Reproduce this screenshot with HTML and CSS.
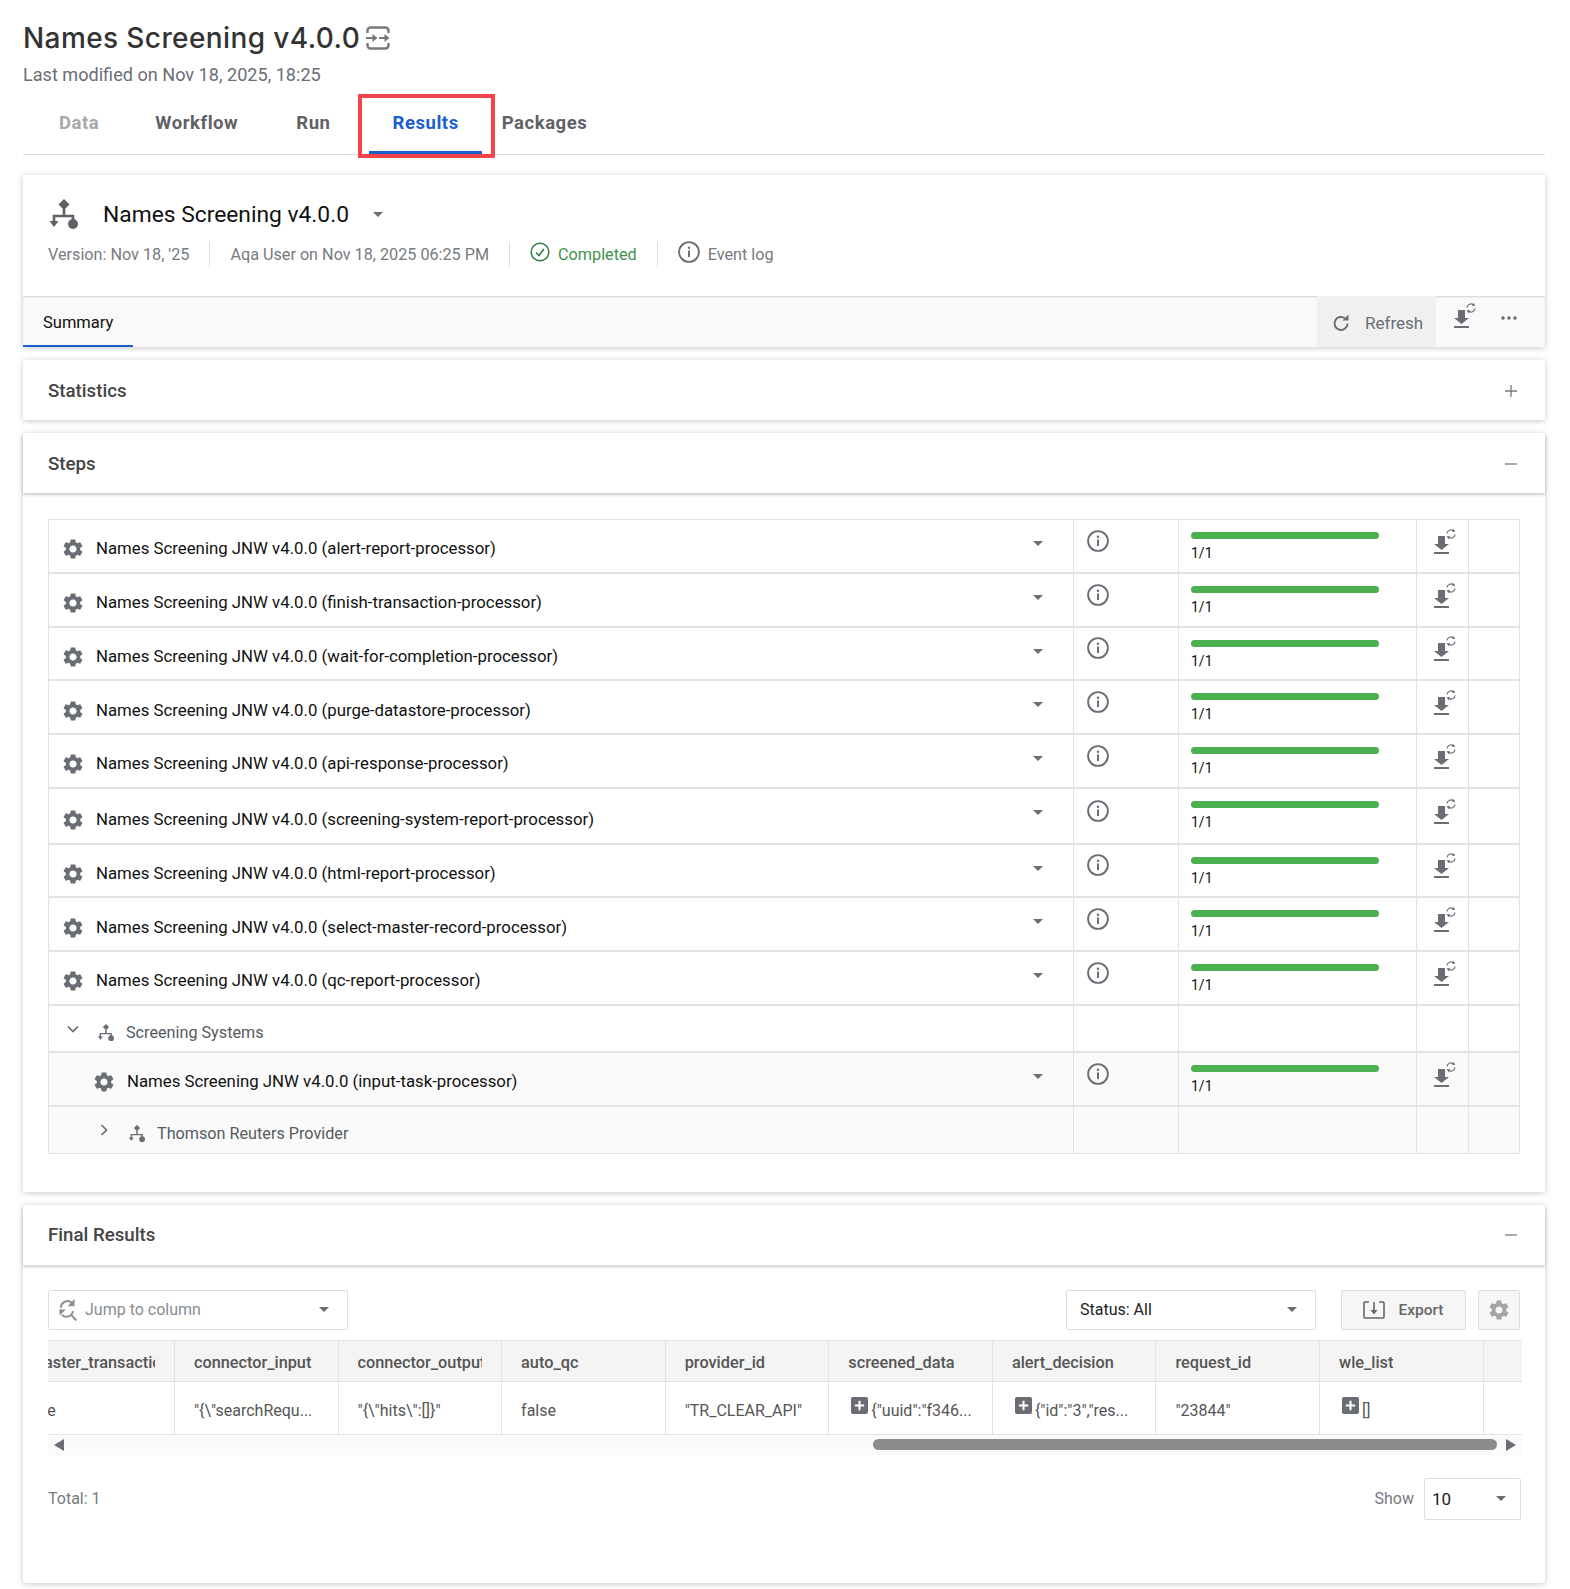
FILE: index.html
```html
<!DOCTYPE html>
<html lang="en">
<head>
  <meta charset="UTF-8" />
  <meta name="viewport" content="width=device-width, initial-scale=1.0"/>
  <title>Names Screening v4.0.0</title>
  <link rel="stylesheet" href="styles.css">
</head>
<body>

  <!-- ======= ICONS ======= -->
  <svg class="sprite" width="0" height="0">
    <symbol id="i-gear" viewBox="0 0 24 24">
      <path fill="currentColor" fill-rule="evenodd" d="M19.14 12.94c.04-.3.06-.61.06-.94 0-.32-.02-.64-.07-.94l2.03-1.58c.18-.14.23-.41.12-.61l-1.92-3.32c-.12-.22-.37-.29-.59-.22l-2.39.96c-.5-.38-1.03-.7-1.62-.94l-.36-2.54c-.04-.24-.24-.41-.48-.41h-3.84c-.24 0-.43.17-.47.41l-.36 2.54c-.59.24-1.13.57-1.62.94l-2.39-.96c-.22-.08-.47 0-.59.22L2.74 8.87c-.12.21-.08.47.12.61l2.03 1.58c-.05.3-.09.63-.09.94s.02.64.07.94l-2.03 1.58c-.18.14-.23.41-.12.61l1.92 3.32c.12.22.37.29.59.22l2.39-.96c.5.38 1.03.7 1.62.94l.36 2.54c.05.24.24.41.48.41h3.84c.24 0 .44-.17.47-.41l.36-2.54c.59-.24 1.13-.56 1.62-.94l2.39.96c.22.08.47 0 .59-.22l1.92-3.32c.12-.22.07-.47-.12-.61l-2.01-1.58zM12 15.6c-1.98 0-3.6-1.62-3.6-3.6s1.62-3.6 3.6-3.6 3.6 1.62 3.6 3.6-1.62 3.6-3.6 3.6z"/>
    </symbol>
    <symbol id="i-info" viewBox="0 0 20 20">
      <circle cx="10" cy="10" r="9" fill="none" stroke="currentColor" stroke-width="1.7"/>
      <rect x="9.1" y="8.6" width="1.8" height="6" fill="currentColor"/>
      <circle cx="10" cy="6.2" r="1.1" fill="currentColor"/>
    </symbol>
    <symbol id="i-flow" viewBox="0 0 28 30">
      <path d="M14 0l5.500 5.500-5.500 5.500-5.500-5.500z" fill="currentColor"/>
      <path d="M14 10v7M4 24v-7h19v6" fill="none" stroke="currentColor" stroke-width="2.600"/>
      <path d="M-.5 22h9l-4.500 6z" fill="currentColor"/>
      <circle cx="23" cy="25" r="5" fill="currentColor"/>
    </symbol>
    <symbol id="i-dl" viewBox="0 0 22 26">
      <path d="M4 7h7v8h4l-7.500 6-7.500-6h4z" fill="currentColor"/>
      <rect x="0" y="23" width="15" height="2" fill="currentColor"/>
      <path d="M13 4.500a4 4 0 0 1 6.500-2.700M21 5.500a4 4 0 0 1-6.500 2.700" fill="none" stroke="currentColor" stroke-width="1.200"/>
      <path d="M19.500 0l1.800 2.700-3.200.2zM14.500 10.300l-1.800-3 3.200-.2z" fill="currentColor"/>
    </symbol>
    <symbol id="i-plus" viewBox="0 0 18 18">
      <rect width="18" height="18" rx="2" fill="currentColor"/>
      <path d="M9 4v10M4 9h10" stroke="#fff" stroke-width="2.200"/>
    </symbol>
  </svg>

  <!-- ======= HEADER ======= -->
  <header class="page-head">
    <h1 class="page-title">
      <span>Names Screening v4.0.0</span>
      <svg class="title-icon" viewBox="0 0 24 24" width="24" height="24">
        <path d="M1.500 7V4.500a3 3 0 0 1 3-3h15a3 3 0 0 1 3 3V7M1.500 17v2.500a3 3 0 0 0 3 3h15a3 3 0 0 0 3-3V17" fill="none" stroke="currentColor" stroke-width="2.400"/>
        <path d="M0 12h7M13 12h7" fill="none" stroke="currentColor" stroke-width="2"/>
        <path d="M6.500 8l5 4-5 4zM18.500 8l5 4-5 4z" fill="currentColor"/>
      </svg>
    </h1>
    <p class="modified">Last modified on Nov 18, 2025, 18:25</p>
    <nav class="tabs">
      <div class="tab disabled">Data</div>
      <div class="tab">Workflow</div>
      <div class="tab">Run</div>
      <div class="tab active">Results</div>
      <div class="tab">Packages</div>
    </nav>
  </header>

  <main>
    <!-- ======= RUN SUMMARY ======= -->
    <section class="card run-card">
      <div class="run-top">
        <svg class="run-icon"><use href="#i-flow"/></svg>
        <span class="run-name">Names Screening v4.0.0</span>
        <span class="caret run-caret"></span>
      </div>
      <div class="run-meta">
        <span class="meta-item">Version: Nov 18, '25</span>
        <span class="meta-item">Aqa User on Nov 18, 2025 06:25 PM</span>
        <span class="meta-item done">
          <svg viewBox="0 0 20 20" width="20" height="20"><circle cx="10" cy="10" r="8.800" fill="none" stroke="currentColor" stroke-width="1.500"/><path d="M6 10.500l3 3 5-6.500" fill="none" stroke="currentColor" stroke-width="1.600"/></svg>
          Completed
        </span>
        <span class="meta-item log"><svg class="info"><use href="#i-info"/></svg>Event log</span>
      </div>
      <div class="run-bar">
        <div class="sub-tab">Summary</div>
        <div class="bar-actions">
          <button class="refresh">
            <svg viewBox="0 0 18 18" width="18" height="18"><path d="M15.500 9.500A6.500 6.500 0 1 1 13 4.300" fill="none" stroke="currentColor" stroke-width="2"/><path d="M10.500 6.500h6v-6z" fill="currentColor"/></svg>
            Refresh
          </button>
          <svg class="dl bar-dl"><use href="#i-dl"/></svg>
          <svg class="dots" viewBox="0 0 16 4" width="16" height="4"><circle cx="2" cy="2" r="1.700" fill="currentColor"/><circle cx="8" cy="2" r="1.700" fill="currentColor"/><circle cx="14" cy="2" r="1.700" fill="currentColor"/></svg>
        </div>
      </div>
    </section>

    <section class="card">
      <div class="card-head flat">
        <h2>Statistics</h2>
        <svg class="toggle" viewBox="0 0 12 12" width="12" height="12"><path d="M0 6h12M6 0v12" stroke="currentColor" stroke-width="1.300"/></svg>
      </div>
    </section>

    <!-- ======= STEPS ======= -->
    <section class="card">
      <div class="card-head">
        <h2>Steps</h2>
        <svg class="toggle" viewBox="0 0 12 12" width="12" height="12"><path d="M0 6h12" stroke="currentColor" stroke-width="1.300"/></svg>
      </div>
      <div class="steps-body">
        <div class="steps">
          <div class="step">
            <div class="cell name"><svg class="gear"><use href="#i-gear"/></svg>Names Screening JNW v4.0.0 (alert-report-processor)<span class="caret"></span></div>
            <div class="cell"><svg class="info"><use href="#i-info"/></svg></div>
            <div class="cell prog"><div class="bar"></div><span>1/1</span></div>
            <div class="cell"><svg class="dl"><use href="#i-dl"/></svg></div>
            <div class="cell"></div>
          </div>
          <div class="step">
            <div class="cell name"><svg class="gear"><use href="#i-gear"/></svg>Names Screening JNW v4.0.0 (finish-transaction-processor)<span class="caret"></span></div>
            <div class="cell"><svg class="info"><use href="#i-info"/></svg></div>
            <div class="cell prog"><div class="bar"></div><span>1/1</span></div>
            <div class="cell"><svg class="dl"><use href="#i-dl"/></svg></div>
            <div class="cell"></div>
          </div>
          <div class="step">
            <div class="cell name"><svg class="gear"><use href="#i-gear"/></svg>Names Screening JNW v4.0.0 (wait-for-completion-processor)<span class="caret"></span></div>
            <div class="cell"><svg class="info"><use href="#i-info"/></svg></div>
            <div class="cell prog"><div class="bar"></div><span>1/1</span></div>
            <div class="cell"><svg class="dl"><use href="#i-dl"/></svg></div>
            <div class="cell"></div>
          </div>
          <div class="step">
            <div class="cell name"><svg class="gear"><use href="#i-gear"/></svg>Names Screening JNW v4.0.0 (purge-datastore-processor)<span class="caret"></span></div>
            <div class="cell"><svg class="info"><use href="#i-info"/></svg></div>
            <div class="cell prog"><div class="bar"></div><span>1/1</span></div>
            <div class="cell"><svg class="dl"><use href="#i-dl"/></svg></div>
            <div class="cell"></div>
          </div>
          <div class="step">
            <div class="cell name"><svg class="gear"><use href="#i-gear"/></svg>Names Screening JNW v4.0.0 (api-response-processor)<span class="caret"></span></div>
            <div class="cell"><svg class="info"><use href="#i-info"/></svg></div>
            <div class="cell prog"><div class="bar"></div><span>1/1</span></div>
            <div class="cell"><svg class="dl"><use href="#i-dl"/></svg></div>
            <div class="cell"></div>
          </div>
          <div class="step tall">
            <div class="cell name"><svg class="gear"><use href="#i-gear"/></svg>Names Screening JNW v4.0.0 (screening-system-report-processor)<span class="caret"></span></div>
            <div class="cell"><svg class="info"><use href="#i-info"/></svg></div>
            <div class="cell prog"><div class="bar"></div><span>1/1</span></div>
            <div class="cell"><svg class="dl"><use href="#i-dl"/></svg></div>
            <div class="cell"></div>
          </div>
          <div class="step">
            <div class="cell name"><svg class="gear"><use href="#i-gear"/></svg>Names Screening JNW v4.0.0 (html-report-processor)<span class="caret"></span></div>
            <div class="cell"><svg class="info"><use href="#i-info"/></svg></div>
            <div class="cell prog"><div class="bar"></div><span>1/1</span></div>
            <div class="cell"><svg class="dl"><use href="#i-dl"/></svg></div>
            <div class="cell"></div>
          </div>
          <div class="step">
            <div class="cell name"><svg class="gear"><use href="#i-gear"/></svg>Names Screening JNW v4.0.0 (select-master-record-processor)<span class="caret"></span></div>
            <div class="cell"><svg class="info"><use href="#i-info"/></svg></div>
            <div class="cell prog"><div class="bar"></div><span>1/1</span></div>
            <div class="cell"><svg class="dl"><use href="#i-dl"/></svg></div>
            <div class="cell"></div>
          </div>
          <div class="step">
            <div class="cell name"><svg class="gear"><use href="#i-gear"/></svg>Names Screening JNW v4.0.0 (qc-report-processor)<span class="caret"></span></div>
            <div class="cell"><svg class="info"><use href="#i-info"/></svg></div>
            <div class="cell prog"><div class="bar"></div><span>1/1</span></div>
            <div class="cell"><svg class="dl"><use href="#i-dl"/></svg></div>
            <div class="cell"></div>
          </div>
          <div class="step group">
            <div class="cell name">
              <svg class="chev" viewBox="0 0 12 12"><path d="M1 3.500l5 5 5-5" fill="none" stroke="currentColor" stroke-width="1.700"/></svg>
              <svg class="flow"><use href="#i-flow"/></svg>Screening Systems
            </div>
            <div class="cell"></div><div class="cell"></div><div class="cell"></div><div class="cell"></div>
          </div>
          <div class="step nested">
            <div class="cell name"><svg class="gear"><use href="#i-gear"/></svg>Names Screening JNW v4.0.0 (input-task-processor)<span class="caret"></span></div>
            <div class="cell"><svg class="info"><use href="#i-info"/></svg></div>
            <div class="cell prog"><div class="bar"></div><span>1/1</span></div>
            <div class="cell"><svg class="dl"><use href="#i-dl"/></svg></div>
            <div class="cell"></div>
          </div>
          <div class="step group nested last">
            <div class="cell name">
              <svg class="chev" viewBox="0 0 12 12"><path d="M3.500 1l5 5-5 5" fill="none" stroke="currentColor" stroke-width="1.700"/></svg>
              <svg class="flow"><use href="#i-flow"/></svg>Thomson Reuters Provider
            </div>
            <div class="cell"></div><div class="cell"></div><div class="cell"></div><div class="cell"></div>
          </div>
        </div>
      </div>
    </section>

    <!-- ======= FINAL RESULTS ======= -->
    <section class="card">
      <div class="card-head results-head">
        <h2>Final Results</h2>
        <svg class="toggle" viewBox="0 0 12 12" width="12" height="12"><path d="M0 6h12" stroke="currentColor" stroke-width="1.300"/></svg>
      </div>
      <div class="results-body">
        <div class="toolbar">
          <div class="select jump">
            <svg viewBox="0 0 18 20" width="20" height="22"><path d="M2.500 8a6 6 0 0 1 10-4.500M13.500 11a6 6 0 0 1-10 3.500M11.500 14l5 5.500" fill="none" stroke="currentColor" stroke-width="1.800"/><path d="M15 0v6.500H8.500zM1 9.500h6L1.500 15z" fill="currentColor"/></svg>
            <span>Jump to column</span>
            <span class="caret"></span>
          </div>
          <div class="select status"><span>Status: All</span><span class="caret"></span></div>
          <button class="btn export">
            <svg viewBox="0 0 22 20" width="22" height="20"><path d="M6 2H2a1 1 0 0 0-1 1v14a1 1 0 0 0 1 1h18a1 1 0 0 0 1-1V3a1 1 0 0 0-1-1h-4" fill="none" stroke="currentColor" stroke-width="1.600"/><path d="M11 2v9" stroke="currentColor" stroke-width="1.600"/><path d="M7.500 10h7L11 14.500z" fill="currentColor"/></svg>
            Export
          </button>
          <button class="btn cog"><svg class="gear"><use href="#i-gear"/></svg></button>
        </div>

        <div class="grid-wrap">
          <table class="grid">
            <thead>
              <tr>
                <th><div>master_transaction</div></th>
                <th><div>connector_input</div></th>
                <th><div>connector_output</div></th>
                <th><div>auto_qc</div></th>
                <th><div>provider_id</div></th>
                <th><div>screened_data</div></th>
                <th><div>alert_decision</div></th>
                <th><div>request_id</div></th>
                <th><div>wle_list</div></th>
                <th class="tail"></th>
              </tr>
            </thead>
            <tbody>
              <tr>
                <td><div>true</div></td>
                <td><div>"{\"searchRequ...</div></td>
                <td><div>"{\"hits\":[]}"</div></td>
                <td><div>false</div></td>
                <td><div>"TR_CLEAR_API"</div></td>
                <td><div class="exp"><svg class="plus"><use href="#i-plus"/></svg>{"uuid":"f346...</div></td>
                <td><div class="exp"><svg class="plus"><use href="#i-plus"/></svg>{"id":"3","res...</div></td>
                <td><div>"23844"</div></td>
                <td><div class="exp"><svg class="plus"><use href="#i-plus"/></svg>[]</div></td>
                <td class="tail"></td>
              </tr>
            </tbody>
          </table>
          <div class="scroll">
            <span class="arrow left"></span>
            <span class="thumb"></span>
            <span class="arrow right"></span>
          </div>
        </div>

        <div class="pager">
          <span>Total: 1</span>
          <div class="show">
            <span>Show</span>
            <div class="select size"><span>10</span><span class="caret"></span></div>
          </div>
        </div>
      </div>
    </section>
  </main>
</body>
</html>
```

FILE: styles.css
```css
body {
  font-family: Roboto, 'Liberation Sans', sans-serif;
  margin: 0;
  padding: 0 25px 6px 23px;
  background: #fff;
  color: #111;
}

.sprite {
  position: absolute;
}

/* ===== HEADER ===== */
.page-head {
  padding-top: 19px;
}

.page-title {
  display: flex;
  align-items: center;
  gap: 6px;
  margin: 0;
  height: 38px;
  font-family: Inter, sans-serif;
  font-size: 28px;
  font-weight: 500;
  letter-spacing: 0.4px;
  color: #333;
}

.title-icon {
  color: #77797e;
}

.modified {
  margin: 6px 0 7px;
  height: 24px;
  line-height: 24px;
  font-size: 18.100px;
  color: #6a6e75;
}

.tabs {
  display: flex;
  gap: 12px;
  height: 60px;
  padding-left: 13px;
  border-bottom: 1px solid #ddd;
}

.tab {
  position: relative;
  padding: 0 23px;
  line-height: 58px;
  font-size: 18.500px;
  font-weight: 700;
  letter-spacing: 0.55px;
  color: #5f6166;
}

.tab.disabled {
  margin-right: -2px;
  color: #a8a8a8;
}

.tab.active {
  margin: 0 -15px 0 4px;
  color: #1a5fd0;
  border-bottom: 3px solid #1a5fd0;
}

/* annotation box around the current tab */
.tab.active::after {
  content: "";
  position: absolute;
  top: 0;
  left: -11px;
  right: -13px;
  bottom: -7px;
  border: 4px solid #f4444a;
}

/* ===== CARDS ===== */
.card {
  margin-top: 13px;
  background: #fff;
  border-radius: 2px;
  box-shadow: 0 1px 6px rgba(0, 0, 0, 0.22);
}

.run-card {
  margin-top: 20px;
}

.card-head {
  display: flex;
  justify-content: space-between;
  align-items: center;
  box-sizing: border-box;
  height: 60px;
  padding: 2px 25px 0 25px;
  box-shadow: 0 2px 3px rgba(0, 0, 0, 0.2);
}

.card-head.flat {
  box-shadow: none;
}

.card-head.results-head {
  padding-top: 0;
}

.card-head h2 {
  margin: 0;
  font-size: 18.700px;
  font-weight: 500;
  color: #444;
}

.toggle {
  margin-right: 3px;
  color: #77797e;
}

/* ===== RUN SUMMARY ===== */
.run-top {
  display: flex;
  align-items: center;
  height: 50px;
  padding: 14px 0 0 27px;
}

.run-icon {
  width: 28px;
  height: 30px;
  color: #5f6166;
}

.run-name {
  margin-left: 25px;
  font-size: 22.800px;
  color: #111;
}

.run-caret {
  margin-left: 24px;
}

.run-meta {
  display: flex;
  align-items: center;
  height: 25px;
  margin-top: 3px;
  padding: 0 0 29px 25px;
  font-size: 16.200px;
  color: #777a80;
}

.meta-item {
  display: flex;
  align-items: center;
  height: 25px;
  padding-right: 20px;
  margin-right: 20px;
  border-right: 1px solid #ddd;
}

.meta-item svg {
  margin-right: 8px;
  margin-top: -6px;
}

.meta-item:last-child {
  border-right: 0;
}

.meta-item.done {
  color: #3f8f4f;
}

.meta-item.done svg {
  color: #2e7d42;
}

.run-bar {
  display: flex;
  justify-content: space-between;
  height: 51px;
  background: #f9f9f9;
  box-shadow: inset 0 2px 2px -1px rgba(0, 0, 0, 0.15);
}

.sub-tab {
  padding: 0 20px;
  line-height: 53px;
  height: 49px;
  font-size: 16.500px;
  color: #111;
  border-bottom: 2px solid #1a5fc8;
}

.bar-actions {
  display: flex;
  align-items: center;
}

.refresh {
  display: flex;
  align-items: center;
  gap: 15px;
  height: 100%;
  width: 119px;
  padding: 2px 0 0 15px;
  border: 0;
  background: #f0f0f0;
  font: 17px Roboto, sans-serif;
  color: #6a6e75;
}

.dots {
  margin: -8px 28px 0 25px;
  color: #666;
}

/* ===== STEPS ===== */
.steps-body {
  padding: 26px 25px 38px 25px;
}

.steps {
  border: 1px solid #e2e2e2;
  border-bottom: 0;
}

.step {
  display: grid;
  grid-template-columns: 1025px 105px 238px 52px 49px;
  height: 53.750px;
  box-sizing: border-box;
  border-bottom: 2px solid #e3e3e3;
  font-size: 16.800px;
}

.step.tall {
  height: 55.750px;
}

.step.group {
  height: 47px;
  font-size: 16.200px;
  color: #555a61;
}

.step.nested {
  background: #fafafa;
}

.step.last {
  border-bottom: 1px solid #e2e2e2;
}

.cell {
  position: relative;
  display: flex;
  align-items: center;
  padding-left: 13px;
  border-right: 1px solid #e2e2e2;
}

.cell:last-child {
  border-right: 0;
}

.cell.name {
  padding: 5px 0 0 15px;
}

.step.tall .cell.name {
  padding-top: 7px;
}

.step.group .cell.name {
  padding-top: 8px;
}

.step.nested .cell.name {
  padding-left: 46px;
}

.gear {
  width: 24px;
  height: 24px;
  margin: 2px 11px 0 -3px;
  flex: none;
  color: #6a6d73;
}

.cell.name .caret {
  position: absolute;
  right: 30px;
  top: 21px;
}

.info {
  width: 22px;
  height: 22px;
  margin-top: -10px;
  color: #6a6d73;
}

.prog {
  display: block;
  padding: 12px 12px 0 12px;
  font-size: 14px;
}

.bar {
  width: 188px;
  height: 7px;
  margin-bottom: 6px;
  border-radius: 4px;
  background: #4caf50;
}

.dl {
  width: 22px;
  height: 26px;
  margin: -8px 0 0 4px;
  flex: none;
  color: #6a6d73;
}

.dl.bar-dl {
  margin: -11px 0 0 18px;
}

.chev {
  width: 12px;
  height: 12px;
  margin: -7px 19px 0 3px;
  flex: none;
  color: #6a6d73;
}

.flow {
  width: 16px;
  height: 17px;
  margin-right: 12px;
  flex: none;
  color: #6a6d73;
}

.caret {
  display: inline-block;
  width: 0;
  height: 0;
  border-left: 5px solid transparent;
  border-right: 5px solid transparent;
  border-top: 5px solid #6a6d73;
}

/* ===== FINAL RESULTS ===== */
.results-body {
  padding: 25px 25px 63px 25px;
}

.toolbar {
  display: flex;
  align-items: stretch;
  height: 40px;
  margin-bottom: 10px;
}

.select {
  display: flex;
  align-items: center;
  justify-content: space-between;
  box-sizing: border-box;
  background: #fff;
  border: 1px solid #ddd;
  border-radius: 2px;
  padding: 0 18px 0 13px;
  font-size: 16px;
  color: #222;
}

.jump {
  width: 300px;
  gap: 7px;
  padding-left: 9px;
  color: #8a8d92;
}

.jump svg {
  flex: none;
  color: #8f8f8f;
}

.jump span:nth-child(2) {
  flex: 1;
}

.status {
  width: 250px;
  margin-left: auto;
}

.btn {
  display: flex;
  align-items: center;
  justify-content: center;
  box-sizing: border-box;
  background: #f6f6f6;
  border: 1px solid #ddd;
  border-radius: 2px;
  font: 500 15.500px Roboto, sans-serif;
  color: #666;
}

.export {
  width: 125px;
  gap: 13px;
  margin-left: 25px;
}

.cog {
  width: 42px;
  margin-left: 12px;
  padding: 0;
}

.cog .gear {
  margin: 0;
  color: #a2a4a8;
}

.grid-wrap {
  position: relative;
  width: 1474px;
  overflow: hidden;
}

.grid {
  border-collapse: collapse;
  table-layout: fixed;
  margin-left: -37.200px;
  width: 1511.200px;
  font-size: 16px;
}

.grid th,
.grid td {
  width: 163.600px;
  padding: 0 19px;
  border: 1px solid #e2e2e2;
  border-left: 0;
  box-sizing: border-box;
  text-align: left;
  overflow: hidden;
  white-space: nowrap;
}

.grid th.tail,
.grid td.tail {
  width: auto;
  padding: 0;
  border-right: 0;
}

.grid th div,
.grid td div {
  overflow: hidden;
}

.grid th {
  height: 41px;
  padding-top: 3px;
  background: #f4f4f4;
  font-size: 16.300px;
  font-weight: 500;
  color: #555;
}

.grid td {
  height: 53px;
  padding-top: 5px;
  color: #555;
}

.grid td:first-child div {
  margin-left: -2px;
}

.grid td .exp {
  display: flex;
  align-items: flex-start;
  overflow: visible;
}

.plus {
  width: 17px;
  height: 17px;
  margin: -4px 3px 0 3px;
  flex: none;
  color: #6a6d73;
}

.scroll {
  position: relative;
  height: 20px;
  background: #fafafa;
}

.thumb {
  position: absolute;
  left: 825px;
  right: 25px;
  top: 4px;
  height: 11px;
  border-radius: 6px;
  background: #8c8c8c;
}

.arrow {
  position: absolute;
  top: 4px;
  width: 0;
  height: 0;
  border-top: 6px solid transparent;
  border-bottom: 6px solid transparent;
}

.arrow.left {
  left: 6px;
  border-right: 10px solid #6a6d73;
}

.arrow.right {
  right: 6px;
  border-left: 10px solid #6a6d73;
}

.pager {
  display: flex;
  justify-content: space-between;
  align-items: center;
  height: 42px;
  margin: 23px -1px 0 0;
  font-size: 16px;
  color: #777a80;
}

.show {
  display: flex;
  align-items: center;
  gap: 10px;
  height: 100%;
}

.size {
  width: 97px;
  height: 42px;
  padding: 0 14px 0 7px;
  font-size: 17px;
}
```
